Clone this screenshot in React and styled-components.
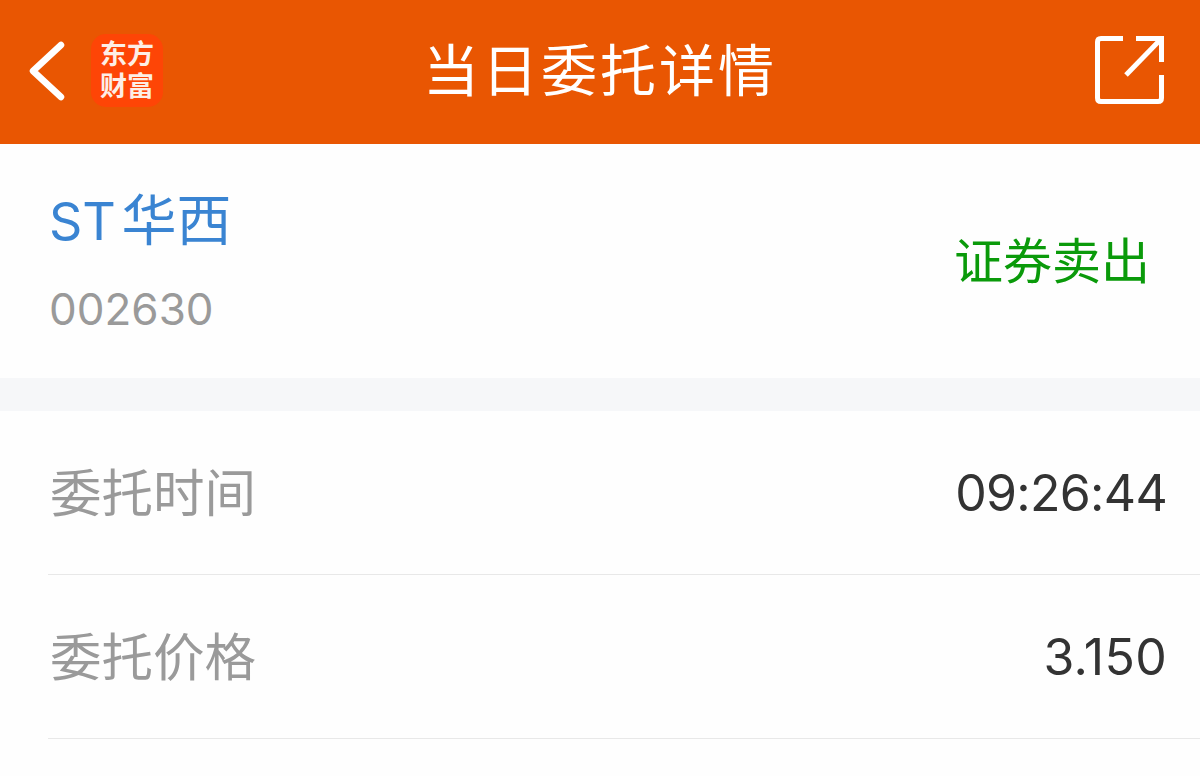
import styled, { createGlobalStyle } from "styled-components";

const Global = createGlobalStyle`
  html, body {
    margin: 0;
    padding: 0;
    background: #fefefe;
    overflow: hidden;
  }
  * { box-sizing: border-box; }
`;

const Page = styled.div`
  width: 1200px;
  height: 776px;
  overflow: hidden;
  font-family: "Inter", "Noto Sans CJK SC", sans-serif;
  background: #fefefe;
`;

const Header = styled.header`
  height: 144px;
  background: #e95602;
  display: flex;
  align-items: center;
  padding: 0 35px 0 28px;
  position: relative;
`;

const BackIcon = styled.svg`
  width: 38px;
  height: 62px;
  flex: none;
`;

const Logo = styled.div`
  width: 72px;
  height: 73px;
  margin-left: 25px;
  margin-bottom: 3px;
  border-radius: 15px;
  background: #fe4506;
  color: #fdeee6;
  display: flex;
  flex-direction: column;
  align-items: center;
  justify-content: center;
  font-size: 27px;
  line-height: 32px;
  font-weight: 700;
  flex: none;
`;

const Title = styled.h1`
  position: absolute;
  left: 0;
  right: 0;
  top: 38px;
  margin: 0;
  text-align: center;
  color: #fff;
  font-size: 56px;
  line-height: 66px;
  font-weight: 400;
  letter-spacing: 3px;
`;

const ShareIcon = styled.svg`
  width: 72px;
  height: 72px;
  margin-left: auto;
  flex: none;
`;

const Stock = styled.section`
  height: 234px;
  padding: 40px 50px 0 49px;
  display: flex;
  justify-content: space-between;
`;

const StockName = styled.div`
  color: #3a84d2;
  font-size: 52px;
  line-height: 72px;
  word-spacing: -9px;
`;

const StockNameCjk = styled.span`
  font-size: 55px;
`;

const StockCode = styled.div`
  color: #9a9a9a;
  font-size: 44px;
  line-height: 56px;
  margin-top: 23px;
`;

const Action = styled.div`
  color: #0a9a0a;
  font-size: 49px;
  line-height: 60px;
  margin-top: 48px;
`;

const Gap = styled.div`
  height: 33px;
  background: #f6f7f9;
`;

const Row = styled.div`
  height: 164px;
  margin-left: 48px;
  padding: 0 33px 0 2px;
  border-bottom: 1px solid #e8e8e8;
  display: flex;
  align-items: center;
  justify-content: space-between;
`;

const Label = styled.span`
  color: #9a9a9a;
  font-size: 51.5px;
  margin-top: -6px;
`;

const Value = styled.span`
  color: #333;
  font-size: 50px;
  letter-spacing: ${(p) => p.$spacing}px;
`;

const rows = [
  { label: "委托时间", value: "09:26:44", spacing: -0.7 },
  { label: "委托价格", value: "3.150", spacing: 0.3 },
];

export default function App() {
  return (
    <Page>
      <Global />
      <Header>
        <BackIcon viewBox="0 0 38 62" fill="none">
          <path d="M33 4 L5 30 L33 56" stroke="#fff" strokeWidth="6.5" strokeLinecap="round" strokeLinejoin="round" />
        </BackIcon>
        <Logo>
          <span>东方</span>
          <span>财富</span>
        </Logo>
        <Title>当日委托详情</Title>
        <ShareIcon viewBox="0 0 72 72" fill="none" stroke="#fff" strokeWidth="5">
          <path d="M30 2.5 H8 Q4.5 2.5 4.5 6 V62 Q4.5 65.5 8 65.5 H65 Q68.5 65.5 68.5 62 V39" />
          <path d="M33 39 L68 3" />
          <path d="M43 2.5 H68.5 V26" />
        </ShareIcon>
      </Header>
      <Stock>
        <div>
          <StockName>ST <StockNameCjk>华西</StockNameCjk></StockName>
          <StockCode>002630</StockCode>
        </div>
        <Action>证券卖出</Action>
      </Stock>
      <Gap />
      {rows.map((r) => (
        <Row key={r.label}>
          <Label>{r.label}</Label>
          <Value $spacing={r.spacing}>{r.value}</Value>
        </Row>
      ))}
    </Page>
  );
}
